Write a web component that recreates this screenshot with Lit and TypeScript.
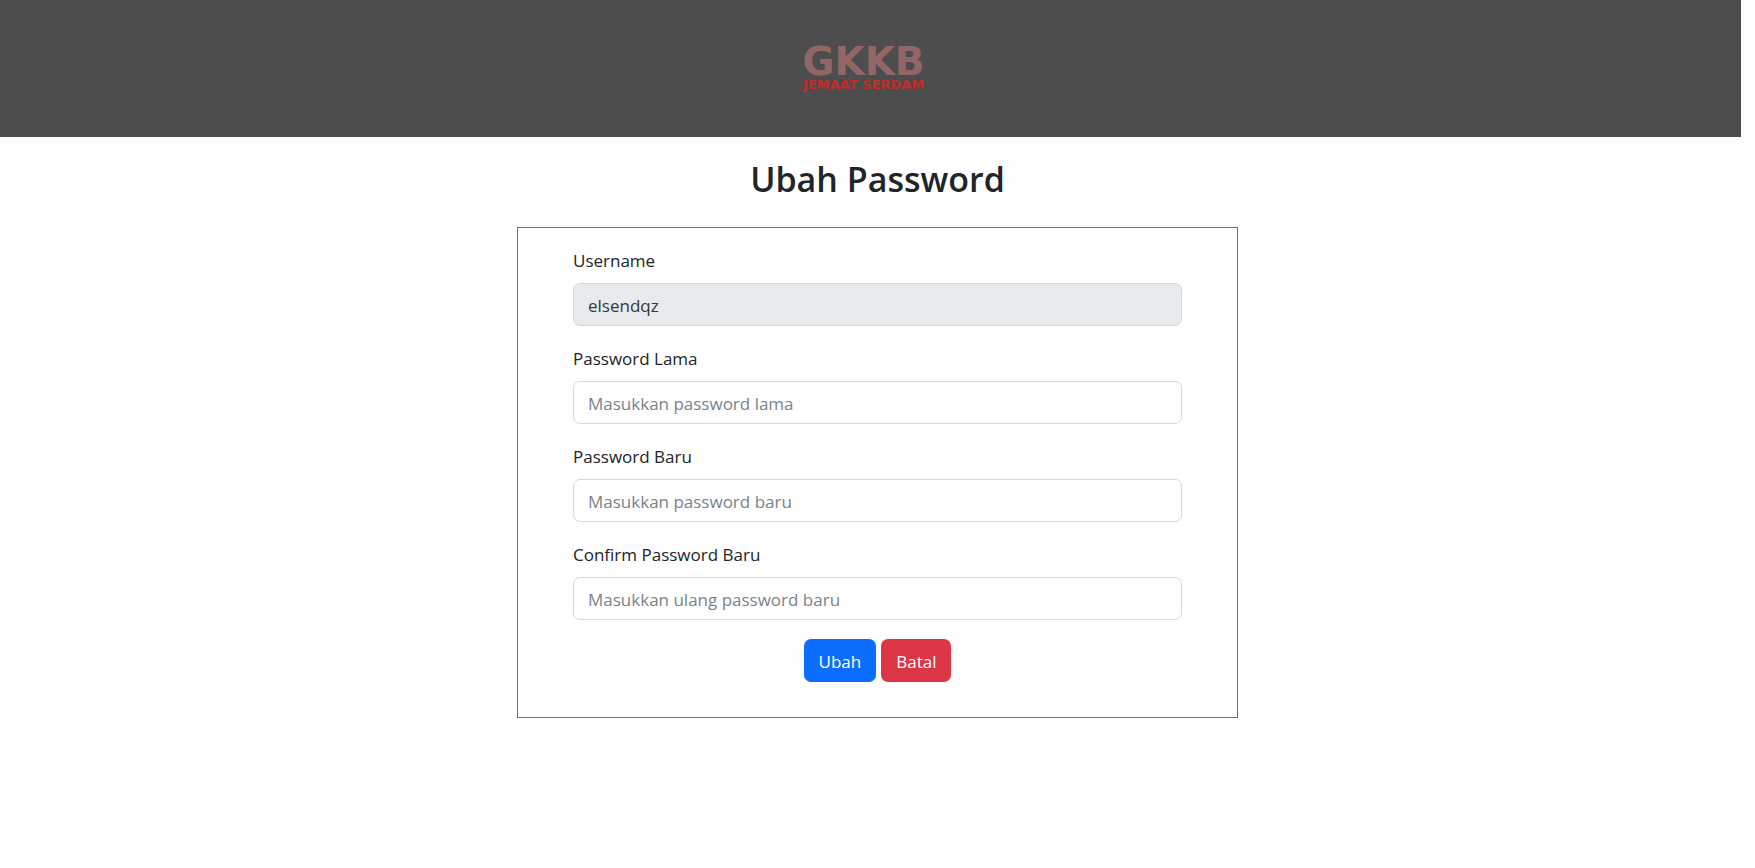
import { LitElement, html, css } from "lit";
import { customElement } from "lit/decorators.js";

interface Field {
  id: string;
  label: string;
  type: string;
  placeholder?: string;
  value?: string;
  disabled?: boolean;
}

const FIELDS: Field[] = [
  { id: "username", label: "Username", type: "text", value: "elsendqz", disabled: true },
  { id: "old-password", label: "Password Lama", type: "password", placeholder: "Masukkan password lama" },
  { id: "new-password", label: "Password Baru", type: "password", placeholder: "Masukkan password baru" },
  { id: "confirm-password", label: "Confirm Password Baru", type: "password", placeholder: "Masukkan ulang password baru" },
];

@customElement("app-root")
export class AppRoot extends LitElement {
  static styles = css`
    :host {
      display: block;
      min-height: 100vh;
      background: #fefefe;
      color: #212529;
      font-family: "Open Sans", "Noto Sans", sans-serif;
      font-size: 17px;
      line-height: 28px;
    }
    * {
      box-sizing: border-box;
    }
    .header {
      display: flex;
      justify-content: center;
      margin-right: 14px;
      padding: 45px 14px 46px 0;
      background: #4d4d4d;
    }
    .logo {
      display: flex;
      flex-direction: column;
      align-items: center;
      font-family: "DejaVu Sans", sans-serif;
      font-weight: 700;
      text-decoration: none;
      white-space: nowrap;
    }
    .logo-name {
      font-size: 39px;
      line-height: 33px;
      color: #936666;
    }
    .logo-sub {
      font-size: 13px;
      line-height: 13px;
      color: #c42a2a;
    }
    .main {
      display: flex;
      flex-direction: column;
      align-items: center;
      padding: 20px 16px;
    }
    .title {
      margin: 0 0 26px;
      font-size: 34px;
      line-height: 44px;
      font-weight: 600;
      text-align: center;
    }
    .card {
      display: flex;
      flex-direction: column;
      gap: 19px;
      width: 100%;
      max-width: 721px;
      padding: 19px 55px 35px;
      border: 1px solid #6c6f70;
    }
    .field {
      display: flex;
      flex-direction: column;
      gap: 8px;
    }
    .input {
      width: 100%;
      height: 43px;
      padding: 2px 14px 0;
      border: 1px solid #d3dadd;
      border-radius: 7px;
      background: #fefefe;
      color: #212529;
      font: inherit;
    }
    .input::placeholder {
      color: #7b8488;
      opacity: 1;
    }
    .input:disabled {
      background: #e7ebee;
      color: #33383b;
      opacity: 1;
    }
    .actions {
      display: flex;
      justify-content: center;
      gap: 5px;
    }
    .button {
      height: 43px;
      padding: 2px 15px 0;
      border: 0;
      border-radius: 7px;
      color: #fff;
      font: inherit;
      cursor: pointer;
    }
    .primary {
      background: #0d6efd;
    }
    .danger {
      background: #dc3545;
    }
  `;

  render() {
    return html`
      <header class="header">
        <a class="logo" href="#">
          <span class="logo-name">GKKB</span>
          <span class="logo-sub">JEMAAT SERDAM</span>
        </a>
      </header>
      <main class="main">
        <h1 class="title">Ubah Password</h1>
        <form class="card" @submit=${(e: Event) => e.preventDefault()}>
          ${FIELDS.map(
            (f) => html`
              <div class="field">
                <label for=${f.id}>${f.label}</label>
                <input
                  class="input"
                  id=${f.id}
                  type=${f.type}
                  .value=${f.value ?? ""}
                  placeholder=${f.placeholder ?? ""}
                  ?disabled=${f.disabled ?? false}
                />
              </div>
            `
          )}
          <div class="actions">
            <button class="button primary" type="submit">Ubah</button>
            <button class="button danger" type="button">Batal</button>
          </div>
        </form>
      </main>
    `;
  }
}
